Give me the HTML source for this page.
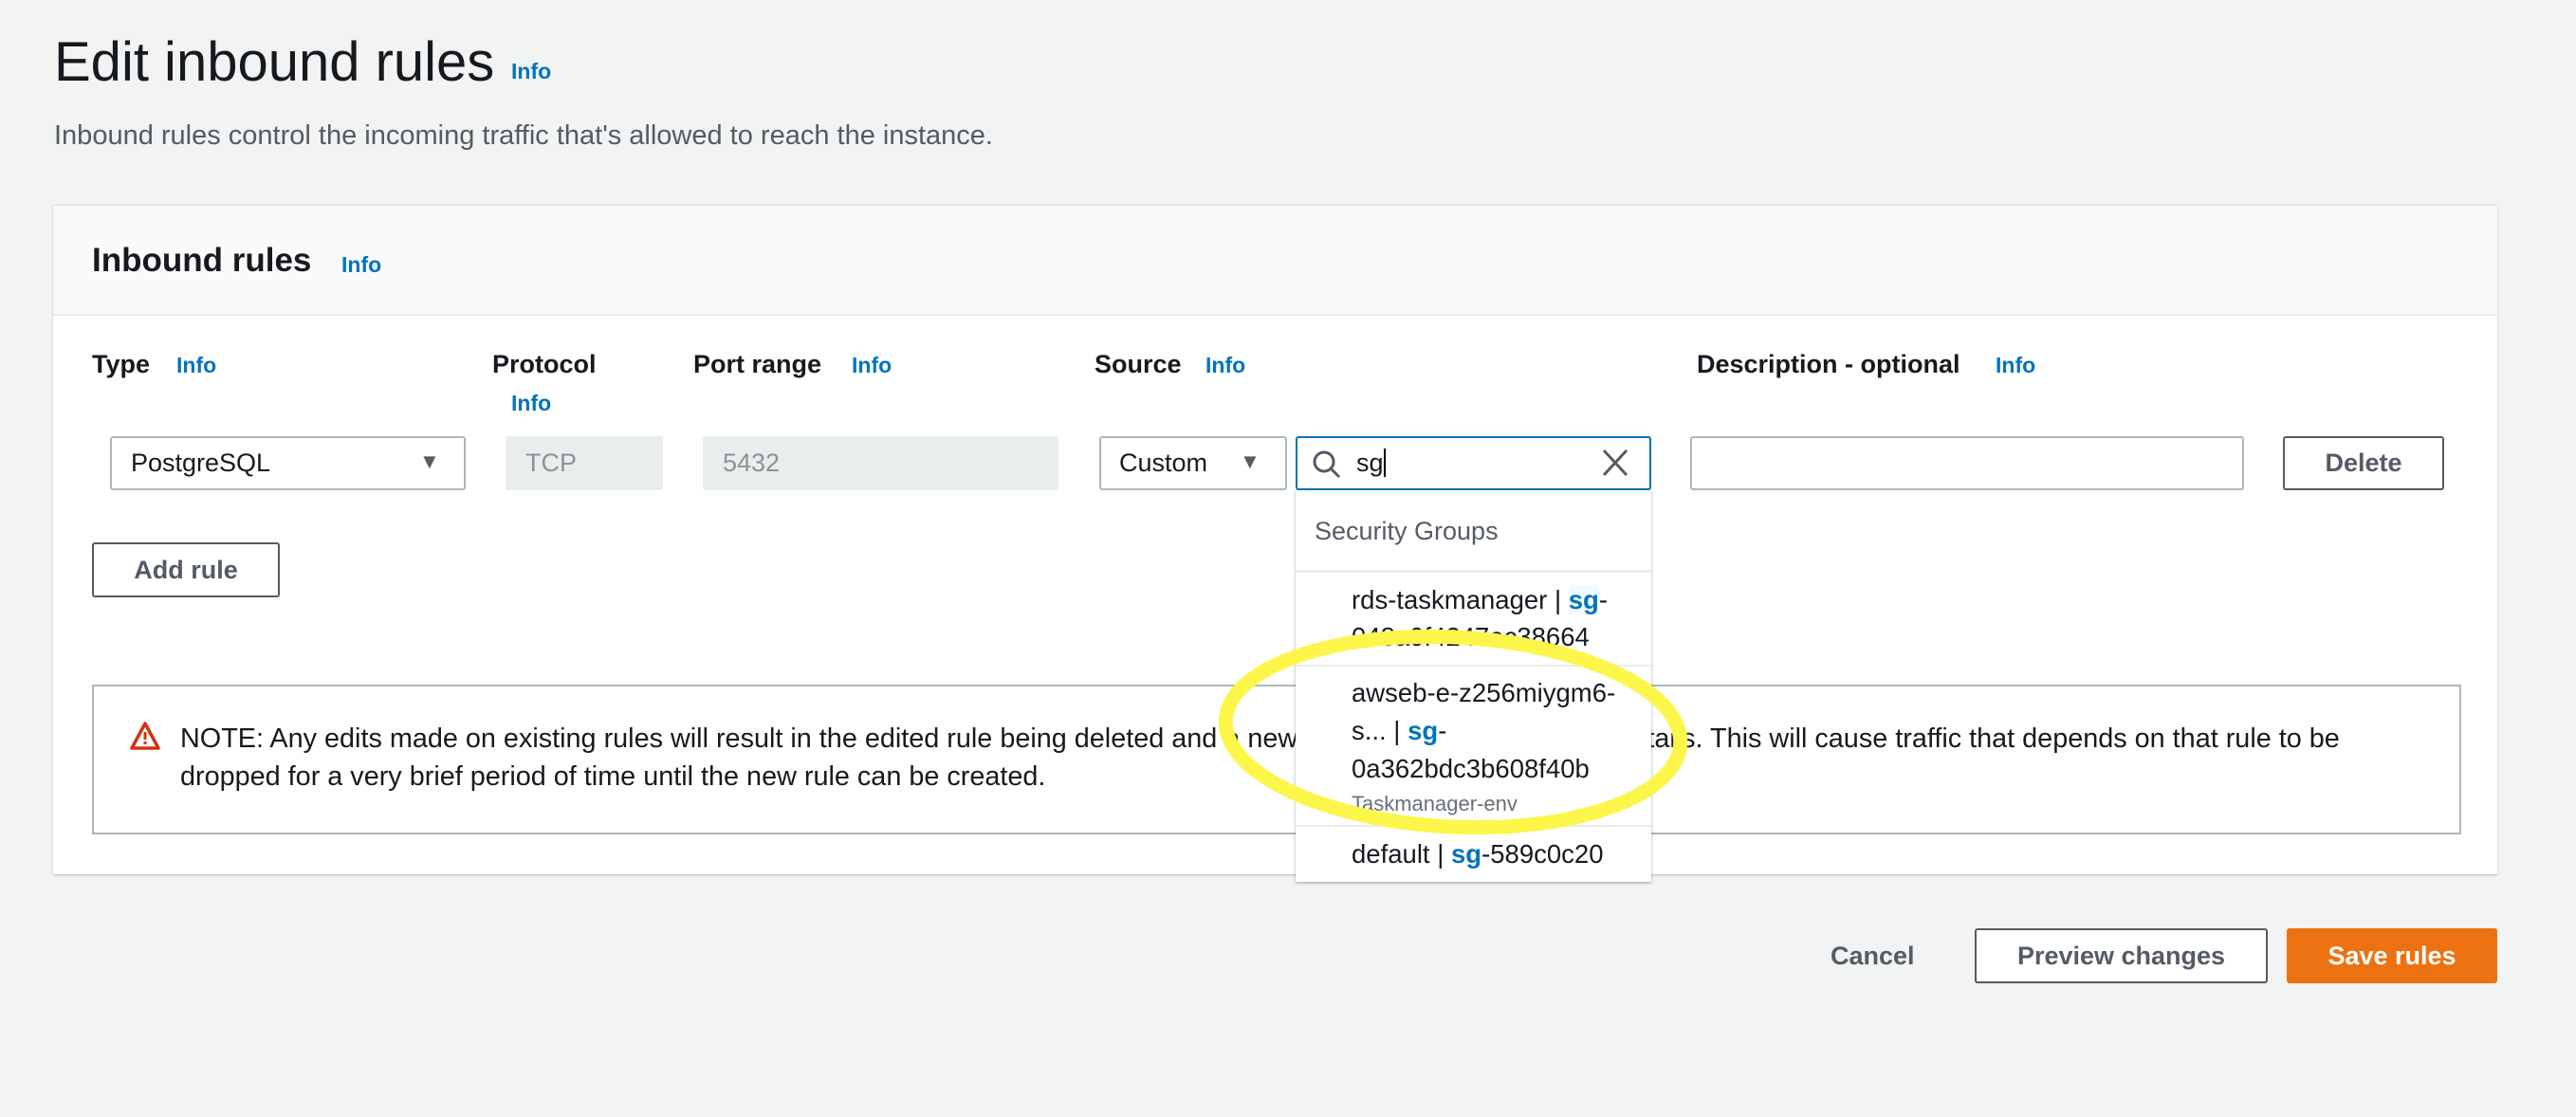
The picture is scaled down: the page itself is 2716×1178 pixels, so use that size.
<!DOCTYPE html>
<html><head><meta charset="utf-8"><style>
*{box-sizing:border-box;margin:0;padding:0}
body{width:2716px;height:1178px;background:#f2f3f3;font-family:"Liberation Sans",sans-serif;color:#16191f;position:relative;overflow:hidden}
.a{position:absolute;white-space:nowrap}
.info{color:#0073bb;font-weight:bold;font-size:23px}
.lbl{font-weight:bold;font-size:27px}
.box{position:absolute;border:2px solid #aab7b8;border-radius:3px;background:#fff}
.btn{position:absolute;border:2px solid #545b64;border-radius:3px;background:#fff;font-weight:bold;font-size:27px;color:#545b64;display:flex;align-items:center;justify-content:center}
.t{font-size:27px}
.d{font-size:27.5px}
</style></head><body>
<div class="a" style="left:57px;top:32px;font-size:58px;">Edit inbound rules</div>
<div class="a info" style="left:539px;top:62px">Info</div>
<div class="a t" style="left:57px;top:127px;color:#545b64;font-size:29px">Inbound rules control the incoming traffic that's allowed to reach the instance.</div>

<div style="position:absolute;left:56px;top:216px;width:2577px;height:706px;background:#fff;box-shadow:0 1px 2px rgba(0,0,0,.25);border-top:1px solid #e0e0e0"></div>
<div style="position:absolute;left:56px;top:217px;width:2577px;height:116px;background:#fafafa;border-bottom:2px solid #eaeded"></div>
<div class="a" style="left:97px;top:255px;font-size:35px;font-weight:bold">Inbound rules</div>
<div class="a info" style="left:360px;top:266px">Info</div>

<div class="a lbl" style="left:97px;top:369px">Type</div><div class="a info" style="left:186px;top:372px">Info</div>
<div class="a lbl" style="left:519px;top:369px">Protocol</div><div class="a info" style="left:539px;top:412px">Info</div>
<div class="a lbl" style="left:731px;top:369px">Port range</div><div class="a info" style="left:898px;top:372px">Info</div>
<div class="a lbl" style="left:1154px;top:369px">Source</div><div class="a info" style="left:1271px;top:372px">Info</div>
<div class="a lbl" style="left:1789px;top:369px">Description - optional</div><div class="a info" style="left:2104px;top:372px">Info</div>

<div class="box" style="left:116px;top:460px;width:375px;height:57px"></div>
<div class="a t" style="left:138px;top:473px">PostgreSQL</div>
<div class="a" style="left:442px;top:474px;font-size:22px;color:#545b64">▼</div>
<div style="position:absolute;left:533px;top:460px;width:166px;height:57px;background:#eaeded;border-radius:3px"></div>
<div class="a t" style="left:554px;top:473px;color:#879596">TCP</div>
<div style="position:absolute;left:741px;top:460px;width:375px;height:57px;background:#eaeded;border-radius:3px"></div>
<div class="a t" style="left:762px;top:473px;color:#879596">5432</div>
<div class="box" style="left:1159px;top:460px;width:198px;height:57px"></div>
<div class="a t" style="left:1180px;top:473px">Custom</div>
<div class="a" style="left:1307px;top:474px;font-size:22px;color:#545b64">▼</div>
<div class="box" style="left:1366px;top:460px;width:375px;height:57px;border-color:#0073bb"></div>
<svg class="a" style="left:1382px;top:473px" width="34" height="34" viewBox="0 0 34 34"><circle cx="14" cy="14" r="10" fill="none" stroke="#545b64" stroke-width="3"/><line x1="21" y1="21" x2="30" y2="30" stroke="#545b64" stroke-width="3"/></svg>
<div class="a t" style="left:1430px;top:473px">sg<span style="display:inline-block;width:2px;height:30px;background:#000;vertical-align:-6px"></span></div>
<svg class="a" style="left:1688px;top:472px" width="30" height="32"><path d="M3 3L27 29M27 3L3 29" stroke="#545b64" stroke-width="3"/></svg>
<div class="box" style="left:1782px;top:460px;width:584px;height:57px"></div>
<div class="btn" style="left:2407px;top:460px;width:170px;height:57px">Delete</div>
<div class="btn" style="left:97px;top:572px;width:198px;height:58px">Add rule</div>

<div style="position:absolute;left:97px;top:722px;width:2498px;height:158px;border:2px solid #aab7b8;background:#fff"></div>
<svg class="a" style="left:136px;top:760px" width="34" height="32" viewBox="0 0 34 32"><path d="M17 3L31 29H3Z" fill="none" stroke="#d13212" stroke-width="3.5" stroke-linejoin="round"/><rect x="15.5" y="12" width="3" height="8" fill="#d13212"/><rect x="15.5" y="22" width="3" height="3" fill="#d13212"/></svg>
<div class="a" style="left:190px;top:763px;font-size:28.8px">NOTE: Any edits made on existing rules will result in the edited rule being deleted and a new rule created with the new details. This will cause traffic that depends on that rule to be</div>
<div class="a" style="left:190px;top:803px;font-size:28.8px">dropped for a very brief period of time until the new rule can be created.</div>

<div style="position:absolute;left:1366px;top:517px;width:375px;height:413px;background:#fff;box-shadow:0 1px 3px rgba(0,0,0,.35);overflow:hidden">
<div class="a" style="left:20px;top:28px;font-size:27px;color:#545b64">Security Groups</div>
<div style="position:absolute;left:0;top:84px;width:100%;height:3px;background:#eaeded"></div>
<div class="a d" style="left:59px;top:100px">rds-taskmanager | <span style="color:#0073bb;font-weight:bold;background:#f1faff">sg</span>-</div>
<div class="a d" style="left:59px;top:139px">048a0f4247ec38664</div>
<div style="position:absolute;left:0;top:184px;width:100%;height:2px;background:#eaeded"></div>
<div class="a d" style="left:59px;top:198px">awseb-e-z256miygm6-</div>
<div class="a d" style="left:59px;top:238px">s... | <span style="color:#0073bb;font-weight:bold">sg</span>-</div>
<div class="a d" style="left:59px;top:278px">0a362bdc3b608f40b</div>
<div class="a" style="left:59px;top:318px;font-size:22px;color:#687078">Taskmanager-env</div>
<div style="position:absolute;left:0;top:353px;width:100%;height:2px;background:#eaeded"></div>
<div class="a d" style="left:59px;top:368px">default | <span style="color:#0073bb;font-weight:bold">sg</span>-589c0c20</div>
</div>

<svg class="a" style="left:0;top:0" width="2716" height="1178"><ellipse cx="1532" cy="772" rx="240" ry="100" transform="rotate(3 1532 772)" fill="none" stroke="#fdf64a" stroke-width="15"/></svg>

<div class="a" style="left:1930px;top:993px;font-size:27px;font-weight:bold;color:#545b64">Cancel</div>
<div class="btn" style="left:2082px;top:979px;width:309px;height:58px">Preview changes</div>
<div class="btn" style="left:2411px;top:979px;width:222px;height:58px;background:#ec7211;border-color:#ec7211;color:#fff">Save rules</div>
</body></html>
